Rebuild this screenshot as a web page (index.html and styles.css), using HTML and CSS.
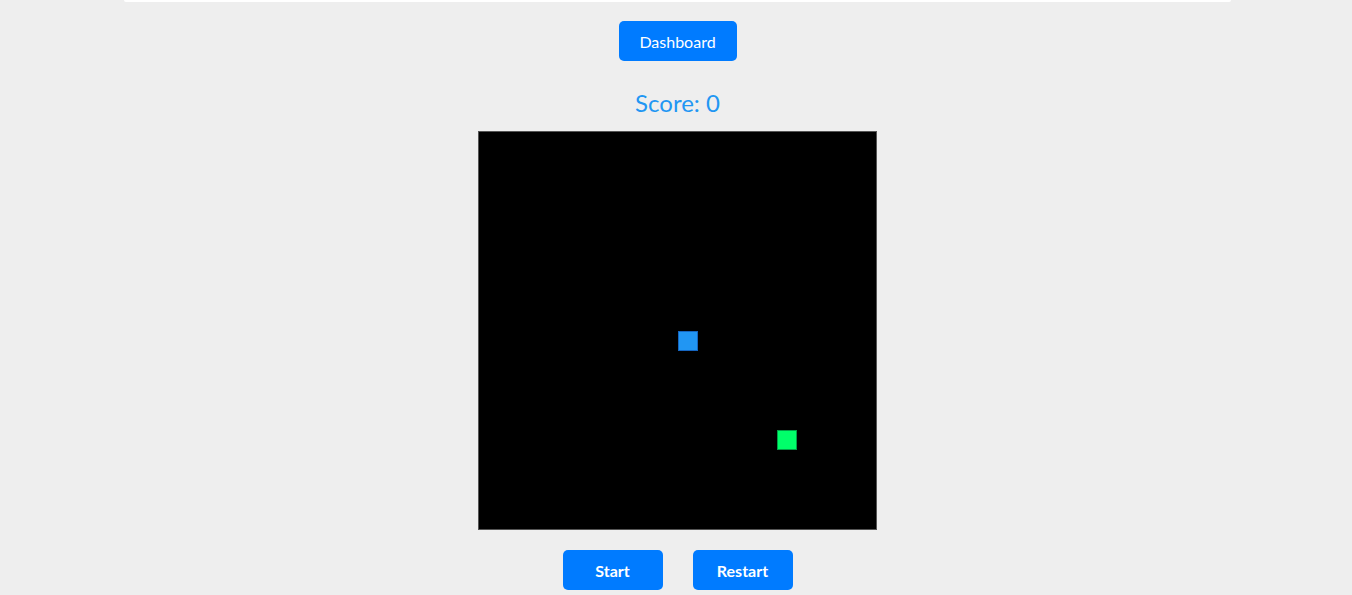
FILE: index.html
```html
<!DOCTYPE html>
<html>
<head>
<meta charset="utf-8">
<link rel="stylesheet" href="styles.css">
</head>
<body>
<div class="page">
  <div class="topcard"></div>
  <button class="btn btn-dash">Dashboard</button>
  <div class="score">Score: 0</div>
  <div class="board">
    <div class="cell snake" style="left:199px;top:199px"></div>
    <div class="cell food" style="left:298px;top:298px"></div>
  </div>
  <div class="controls">
    <button class="btn btn-ctl">Start</button>
    <button class="btn btn-ctl">Restart</button>
  </div>
</div>
</body>
</html>
```
FILE: styles.css
```css
html, body {
  margin: 0;
  padding: 0;
  background: #eeeeee;
  font-family: Lato, "Noto Sans", sans-serif;
}
.page {
  padding: 0 121px 0 124px;
  display: flex;
  flex-direction: column;
  align-items: center;
  height: 595px;
  box-sizing: border-box;
  overflow: hidden;
}
.page > * {
  flex-shrink: 0;
}
.topcard {
  align-self: stretch;
  height: 2px;
  background: #ffffff;
  border-radius: 0 0 4px 4px;
}
.btn {
  background: #007bff;
  color: #ffffff;
  border: none;
  border-radius: 5px;
  font-family: inherit;
  font-size: 16px;
  cursor: pointer;
  padding: 0;
}
.btn-dash {
  margin-top: 19px;
  width: 118px;
  height: 40px;
}
.score {
  margin-top: 26px;
  height: 32px;
  line-height: 32px;
  font-size: 24px;
  color: #2196f3;
}
.board {
  margin-top: 12px;
  width: 397px;
  height: 397px;
  background: #000000;
  border: 1px solid #555555;
  position: relative;
}
.cell {
  position: absolute;
  width: 18px;
  height: 18px;
}
.snake {
  background: #2196f3;
  border: 1px solid #1565c0;
}
.food {
  background: #00ff6a;
  border: 1px solid #00a046;
}
.controls {
  margin-top: 20px;
  display: flex;
  gap: 30px;
}
.btn-ctl {
  width: 100px;
  height: 40px;
  font-weight: 700;
}
```
